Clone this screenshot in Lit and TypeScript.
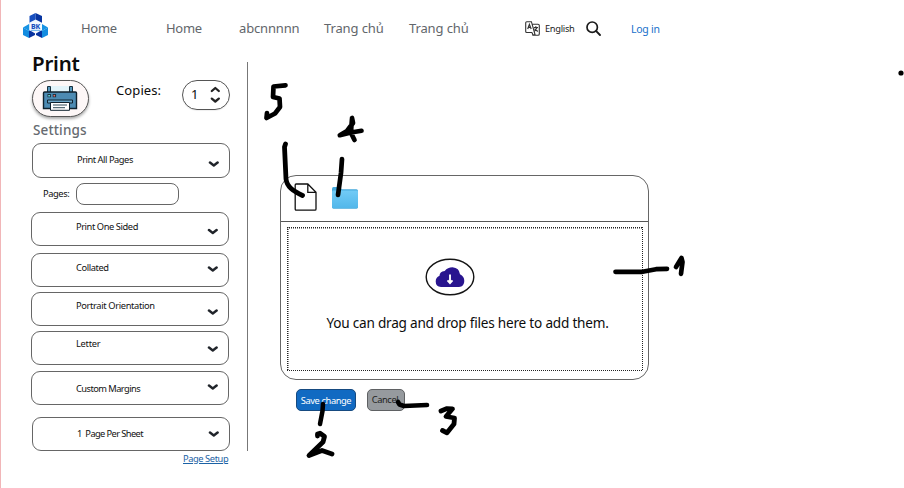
import { LitElement, html, css, svg } from "lit";
import { customElement, property } from "lit/decorators.js";
import { styleMap } from "lit/directives/style-map.js";

interface Option {
  label: string;
  gap: number;
  height: number;
  textShift: number;
  iconShift: number;
  inset: number;
  spacing: number;
}

const OPTIONS: Option[] = [
  { label: "Print One Sided", gap: 7, height: 34, textShift: -2, iconShift: 2.5, inset: 0, spacing: -0.42 },
  { label: "Collated", gap: 7, height: 34, textShift: -2, iconShift: -1, inset: 0, spacing: -0.4 },
  { label: "Portrait Orientation", gap: 5, height: 34, textShift: -3, iconShift: 3, inset: 0, spacing: -0.35 },
  { label: "Letter", gap: 5, height: 34, textShift: -4, iconShift: 1, inset: 0, spacing: -0.25 },
  { label: "Custom Margins", gap: 6, height: 34, textShift: 1, iconShift: -1, inset: 0, spacing: -0.55 },
  { label: "1  Page Per Sheet", gap: 12, height: 34, textShift: 0, iconShift: 0, inset: 1, spacing: -0.6 },
];

@customElement("option-select")
class OptionSelect extends LitElement {
  @property() label = "";
  @property({ type: Number }) textShift = 0;
  @property({ type: Number }) iconShift = 0;
  @property({ type: Number }) spacing = 0;

  static styles = css`
    :host {
      display: flex;
      align-items: center;
      justify-content: space-between;
      box-sizing: border-box;
      width: 198px;
      border: 1px solid #666;
      border-radius: 9px;
      padding: 0 10px 0 44px;
      background: #fff;
    }
    .label {
      font-size: 9.3px;
      line-height: 12px;
      white-space: pre;
      color: #111;
    }
    .chevron {
      display: block;
      width: 11px;
      height: 8px;
    }
  `;

  render() {
    return html`
      <span class="label" style=${styleMap({ transform: `translateY(${this.textShift}px)`, letterSpacing: `${this.spacing}px` })}>${this.label}</span>
      <svg class="chevron" style=${styleMap({ transform: `translateY(${this.iconShift}px)` })} viewBox="0 0 11 8">
        <path d="M2 2.6 5.8 5.4 9.6 2.6" fill="none" stroke="#20242a" stroke-width="2.5" stroke-linecap="round" stroke-linejoin="round" />
      </svg>
    `;
  }
}

const STROKES: { d: string; w: number }[] = [
  { d: "M285.5 85.3 273.5 86.5 273 97 279.5 98.5 280 107 275 113.5 266.5 118 267 113", w: 4.7 },
  { d: "M285.5 144 284.5 147 286 179C287 187 293 191 302.5 195.5", w: 4.8 },
  { d: "M352 118 353 123 347 131 339.8 135.2 351 132.5 361.5 130.8M350 131 354.5 140M352 119 351 131", w: 4.7 },
  { d: "M342 159 341 173 338 195", w: 4.7 },
  { d: "M615.5 271.8H642.5L656 269.2 667 268.9", w: 4.7 },
  { d: "M676 267 681.5 258 682.5 262 681 273.8", w: 4.7 },
  { d: "M323 404 322.5 411 320 424", w: 4.5 },
  { d: "M317.5 436 317.5 434 320 433.2 324.5 436.5 323 442 309 455.5 322 450.5 332 454", w: 4.8 },
  { d: "M398 402 399.5 404.5 404 406 427 405", w: 4.6 },
  { d: "M441 411 447 408.6 452.5 408.8 446 416.5 454.5 418 454 424 447 432.8 442.5 430.5", w: 4.8 },
];

@customElement("app-root")
class AppRoot extends LitElement {
  static styles = css`
    :host {
      display: block;
      position: relative;
      box-sizing: border-box;
      width: 904px;
      height: 488px;
      overflow: hidden;
      background: #fff;
      border-left: 1px solid #f1b6b8;
      color: #0c0c0c;
      font-family: "Noto Sans", "Open Sans", sans-serif;
    }
    svg { display: block; flex: none; }
    .header {
      display: flex;
      align-items: center;
      height: 57px;
      padding-left: 21px;
      white-space: nowrap;
    }
    .logo { width: 28px; height: 28px; margin: -5px 31px 0 0; }
    .nav { display: flex; margin-top: -2px; color: #62666b; font-size: 13px; line-height: 18px; }
    .nav span { width: 85px; }
    .nav .second { width: 73px; }
    .nav .last { width: 116px; }
    .word { letter-spacing: -0.3px; }
    .nav .wide { letter-spacing: -0.15px; }
    .nav .viet { letter-spacing: -0.12px; }
    .language { width: 15px; height: 15px; margin-right: 5px; }
    .english { width: 40px; font-size: 9.3px; letter-spacing: -0.3px; color: #222; }
    .search { width: 17px; height: 17px; margin-right: 29px; }
    .login { color: #1770cb; font-size: 10.5px; letter-spacing: -0.25px; margin-top: 1px; }
    .body { display: flex; align-items: flex-start; }
    .sidebar { width: 246px; height: 405px; }
    .title {
      margin: -7px 0 0 31px;
      height: 29px;
      font-size: 20.5px;
      line-height: 27px;
      font-weight: 600;
      letter-spacing: -0.2px;
    }
    .tools { display: flex; height: 43px; padding-left: 31px; align-items: flex-start; }
    .printer-button {
      display: flex;
      justify-content: center;
      box-sizing: border-box;
      width: 57px;
      height: 37px;
      margin-top: 1px;
      padding: 5px 2px 0 0;
      border: 1px solid #555;
      border-radius: 19px;
      background: #fdf7f7;
      box-shadow: 0 2px 3px #0005;
    }
    .printer { width: 36px; height: 25px; }
    .copies { width: 66px; margin: 2px 0 0 27px; font-size: 13px; line-height: 18px; letter-spacing: 0.1px; white-space: nowrap; }
    .stepper {
      display: flex;
      align-items: center;
      box-sizing: border-box;
      width: 48px;
      height: 30px;
      margin-top: 1px;
      padding: 0 8px;
      justify-content: space-between;
      border: 1px solid #555;
      border-radius: 15px;
      font-size: 13px;
      box-shadow: 0 1px 1px #0001;
    }
    .count { margin-top: -2px; }
    .arrows { width: 11px; height: 18px; }
    .settings { height: 21px; margin: 0 0 0 32px; font-size: 13.5px; line-height: 17px; font-weight: 500; letter-spacing: 0.15px; color: #666a70; }
    .all { height: 35px; margin-left: 31px; }
    .pages { display: flex; align-items: center; margin: 5px 0 0 42px; font-size: 9.3px; }
    .pages-label { width: 33px; margin-top: -1px; letter-spacing: -0.4px; }
    .pages-field { box-sizing: border-box; width: 103px; height: 22px; border: 1px solid #666; border-radius: 8px; }
    .setup {
      width: 46px;
      margin: 2px 0 0 182px;
      font-size: 9.3px;
      line-height: 12px;
      letter-spacing: -0.42px;
      color: #1b62a5;
      text-decoration: underline;
      white-space: nowrap;
    }
    .divider { width: 1px; height: 389px; margin-top: 5px; background: #777; }
    .main { margin: 118px 0 0 32px; }
    .uploader {
      box-sizing: border-box;
      width: 369px;
      height: 205px;
      border: 1px solid #666;
      border-radius: 16px;
    }
    .toolbar { display: flex; box-sizing: border-box; height: 46px; padding: 7px 0 0 13px; border-bottom: 1px solid #555; }
    .file { width: 23px; height: 28px; margin-right: 14px; }
    .folder { width: 27px; height: 24px; margin: 3px 0 0 0; }
    .dropzone {
      display: flex;
      flex-direction: column;
      align-items: center;
      box-sizing: border-box;
      width: 356px;
      height: 144px;
      margin: 5px 0 0 6px;
      padding-top: 31px;
      background:
        repeating-linear-gradient(90deg, #222 0 1px, transparent 1px 2px) top / 100% 1.5px no-repeat,
        repeating-linear-gradient(90deg, #222 0 1px, transparent 1px 2px) bottom / 100% 1.5px no-repeat,
        repeating-linear-gradient(#222 0 1px, transparent 1px 2px) left / 1.5px 100% no-repeat,
        repeating-linear-gradient(#222 0 1px, transparent 1px 2px) right / 1.5px 100% no-repeat;
    }
    .cloud { width: 50px; height: 38px; margin-right: 31px; }
    .hint { margin: 17px 0 0 5px; font-size: 13.6px; line-height: 20px; letter-spacing: -0.22px; white-space: nowrap; }
    .actions { display: flex; gap: 11px; margin: 9px 0 0 16px; }
    .action {
      display: flex;
      align-items: center;
      justify-content: center;
      box-sizing: border-box;
      height: 22px;
      border: 1px solid #164a80;
      border-radius: 5px;
      font-size: 9.3px;
      letter-spacing: -0.4px;
      white-space: nowrap;
    }
    .save { width: 60px; background: #116ac2; color: #fff; }
    .cancel { width: 38px; background: #969a9e; border-color: #5f6163; color: #222; padding: 0 2px 1px 0; }
    .notes { position: absolute; left: -1px; top: 0; width: 904px; height: 488px; pointer-events: none; }
  `;

  render() {
    return html`
      <header class="header">
        <svg class="logo" viewBox="0 0 28 28">
          <path d="M7.5 4 13.5 1V12L7.5 15Z" fill="#174fc0" /><path d="M13.5 1 20 4V15L13.5 12Z" fill="#0735a1" />
          <path d="M1 15.5 7 12 13 16 7 19Z" fill="#1593e4" /><path d="M1 15.5 7 19V26L1 23Z" fill="#138ce0" /><path d="M7 19 13 16V23L7 26Z" fill="#0732a0" />
          <path d="M14 16 20 12 26 15.5 20 19Z" fill="#1593e4" /><path d="M14 16 20 19V26L14 23Z" fill="#0732a0" /><path d="M20 19 26 15.5V23L20 26Z" fill="#138ce0" />
          <path d="M13.6 7.5 20 10.8V18L13.6 21.7 7.2 18V10.8Z" fill="#f3f8ff" />
          <text x="13.6" y="16.6" text-anchor="middle" font-size="7" font-weight="800" fill="#174fc0">BK</text>
          <path d="M9 18.4H18.5" stroke="#78b9ed" stroke-width="1.2" />
        </svg>
        <nav class="nav">
          <span class="word">Home</span><span class="second word">Home</span><span class="wide">abcnnnnn</span><span class="viet">Trang chủ</span><span class="last viet">Trang chủ</span>
        </nav>
        <svg class="language" viewBox="0 0 15 15" fill="none" stroke="#333">
          <path d="M7 11.5H1.8Q.7 11.5.7 10.5V1.8Q.7.7 1.8.7H6.4L10 13.5 8 14.3 7 11.5M7.3 3.3H13Q14.3 3.3 14.3 4.5V13Q14.3 14.3 13 14.3H8" stroke-width="1.1" />
          <path d="M2.7 8 4.4 3.5 6.2 8M3.3 6.5H5.7M8.8 6.5H13M10.8 5.3V6.5M12.2 6.5 9.4 10.5M9.5 7.7 12.8 10.5" stroke-width="1.2" />
        </svg>
        <span class="english">English</span>
        <svg class="search" viewBox="0 0 17 17" fill="none" stroke="#1a1a1a" stroke-linecap="round">
          <circle cx="7.2" cy="7.2" r="5.2" stroke-width="1.7" /><path d="M11.2 11.2 15 15" stroke-width="1.9" />
        </svg>
        <span class="login">Log in</span>
      </header>
      <div class="body">
        <aside class="sidebar">
          <h1 class="title">Print</h1>
          <div class="tools">
            <div class="printer-button">
              <svg class="printer" viewBox="0 0 36 25">
                <path d="M9 0H27V6H9Z" fill="#e3f4fa" />
                <path d="M5.5.5H8.5V7H5.5ZM27.5.5H30.5V7H27.5Z" fill="#5799be" stroke="#18313f" />
                <path d="M2.5 6H33.5Q34.5 6 34.5 7V22.5H1.5V7Q1.5 6 2.5 6Z" fill="#4d8bb3" stroke="#10222e" stroke-width="1.4" />
                <path d="M5.5 8H8.9V11.3H5.5ZM10.7 8H14.1V11.3H10.7Z" fill="#193241" />
                <path d="M6.3 8.9H7.9V10.5H6.3Z" fill="#6ce4e8" /><path d="M11.5 8.9H13.1V10.5H11.5Z" fill="#f36b61" />
                <path d="M5.5 14H30.5V17H5.5Z" fill="#6ba6c8" stroke="#10222e" />
                <path d="M8.5 16.5H27.5V24.3H8.5Z" fill="#fff" stroke="#10222e" />
                <path d="M11 19H25M11 21.7H23" stroke="#304b58" />
              </svg>
            </div>
            <span class="copies">Copies:</span>
            <div class="stepper">
              <span class="count">1</span>
              <svg class="arrows" viewBox="0 0 11 18" fill="none" stroke="#222" stroke-width="2.3" stroke-linecap="round" stroke-linejoin="round">
                <path d="M1.8 5 5.3 2 8.8 5M1.8 12.6 5.3 15.5 8.8 12.6" />
              </svg>
            </div>
          </div>
          <div class="settings">Settings</div>
          <option-select class="all" label="Print All Pages" .textShift=${-1} .iconShift=${3} .spacing=${-0.46}></option-select>
          <div class="pages"><span class="pages-label">Pages:</span><div class="pages-field"></div></div>
          ${OPTIONS.map(
            (o) => html`<option-select
              label=${o.label}
              .textShift=${o.textShift}
              .iconShift=${o.iconShift}
              .spacing=${o.spacing}
              style=${styleMap({ height: `${o.height}px`, marginTop: `${o.gap}px`, marginLeft: `${30 + o.inset}px` })}
            ></option-select>`,
          )}
          <div class="setup">Page Setup</div>
        </aside>
        <div class="divider"></div>
        <main class="main">
          <section class="uploader">
            <div class="toolbar">
              <svg class="file" viewBox="0 0 23 28"><path d="M2.2 1H13.8L22 9.3V26Q22 27.2 21 27.2H2.5Q1.2 27.2 1.2 26V2Q1.2 1 2.2 1M13.8 1V9.3H22" fill="#fff" stroke="#111" stroke-width="1.3" /></svg>
              <svg class="folder" viewBox="0 0 27 24">
                <defs><linearGradient id="folder" x2="0" y2="1"><stop stop-color="#72cbf6" /><stop offset="1" stop-color="#52b7ea" /></linearGradient></defs>
                <path d="M1 3Q1 1 2.5 1H8L11 3.3H25.5Q27 3.3 27 5V21Q27 22.7 25.5 22.7H2.5Q1 22.7 1 21Z" fill="#45a9dc" />
                <path d="M1 5.5Q1 4.5 2.5 4.5H25.5Q27 4.5 27 5.5V20.5Q27 22 25.5 22H2.5Q1 22 1 20.5Z" fill="url(#folder)" />
              </svg>
            </div>
            <div class="dropzone">
              <svg class="cloud" viewBox="0 0 50 38">
                <ellipse cx="25" cy="19" rx="23.8" ry="17.8" fill="#fff" stroke="#151515" stroke-width="1.4" />
                <path d="M16 29Q10.7 28.5 10.7 23.5 10.7 19.5 14.5 17.8 14.5 13.5 19.7 12.9 22.7 9.2 27.5 9.2 34.3 9.8 35 16.3 39.3 18.5 39.3 23 39.3 28.5 34 29Z" fill="#29158f" />
                <path d="M25 16.5V24M22.5 22.3 25 25 27.5 22.3" fill="none" stroke="#fff" stroke-width="1.9" />
              </svg>
              <div class="hint">You can drag and drop files here to add them.</div>
            </div>
          </section>
          <div class="actions"><div class="action save">Save change</div><div class="action cancel">Cancel</div></div>
        </main>
      </div>
      <svg class="notes" viewBox="0 0 904 488" fill="none" stroke="#000" stroke-linecap="round" stroke-linejoin="round">
        ${STROKES.map((s) => svg`<path d=${s.d} stroke-width=${s.w} />`)}
        <circle cx="901" cy="73" r="2.6" fill="#000" stroke="none" />
      </svg>
    `;
  }
}
